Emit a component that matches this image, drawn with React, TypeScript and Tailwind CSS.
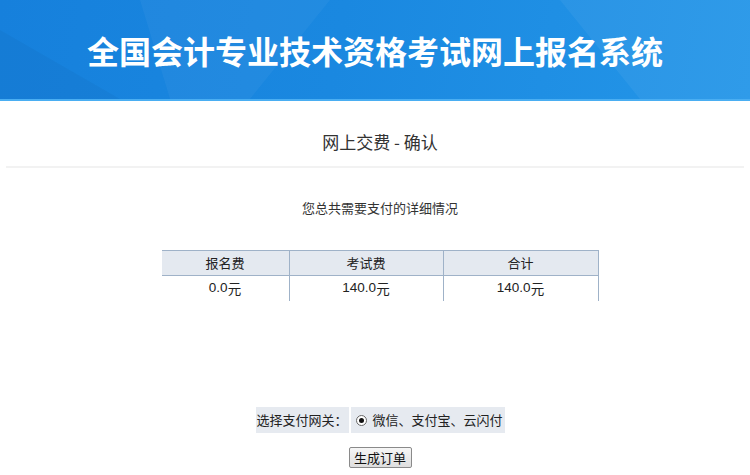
import React from "react";

const font = { fontFamily: '"Noto Sans CJK SC", "Liberation Sans", sans-serif' };
const numFont = { fontFamily: '"Liberation Sans", "Noto Sans CJK SC", sans-serif' };

export default function App() {
  return (
    <div className="w-[750px] h-[475px] bg-white overflow-hidden text-[#333]" style={font}>
      <header className="relative h-[101px] bg-[linear-gradient(100deg,#1680dc_0%,#1a88e0_45%,#2496e8_100%)] border-b-[2px] border-[#4aaef2] flex items-center justify-center">
        <svg className="absolute inset-0 w-full h-full" viewBox="0 0 750 99" preserveAspectRatio="none">
          <polygon points="140,0 330,0 250,99 170,99" fill="#ffffff" opacity="0.04" />
          <polygon points="560,0 750,0 750,99 640,99" fill="#ffffff" opacity="0.05" />
          <polygon points="0,30 120,99 0,99" fill="#000000" opacity="0.03" />
        </svg>
        <h1 className="relative text-white font-bold text-[32px] leading-[40px] tracking-[0px]">
          全国会计专业技术资格考试网上报名系统
        </h1>
      </header>

      <main className="pl-[10px]">
        <div className="pt-[29px] pb-[12px] text-center text-[17px] leading-[24px] text-[#333]">
          网上交费 - 确认
        </div>
      </main>
      <div className="mx-[6px] h-[2px] bg-[#f2f2f2]" />

      <main className="pl-[10px] flex flex-col items-center">
        <div className="mt-[30px] text-[13px] leading-[20px] text-[#333]">您总共需要支付的详细情况</div>

        <div className="mt-[32px] w-[437px] text-[13px] text-[#222]">
          <div className="flex h-[26px] bg-[#e4e9f0] border-t border-b border-r border-[#9fb2c8]">
            <div className="w-[128px] flex items-center justify-center border-r border-[#9fb2c8]">报名费</div>
            <div className="w-[154px] flex items-center justify-center border-r border-[#9fb2c8]">考试费</div>
            <div className="flex-1 flex items-center justify-center">合计</div>
          </div>
          <div className="flex h-[25px] border-r border-[#9fb2c8] text-[13.5px]" style={numFont}>
            <div className="w-[128px] flex items-center justify-center border-r border-[#9fb2c8]">0.0<span style={font}>元</span></div>
            <div className="w-[154px] flex items-center justify-center border-r border-[#9fb2c8]">140.0<span style={font}>元</span></div>
            <div className="flex-1 flex items-center justify-center">140.0<span style={font}>元</span></div>
          </div>
        </div>

        <div className="mt-[106px] flex gap-[2px] h-[26px] text-[13px] text-[#222]">
          <div className="w-[93px] bg-[#e6eaf0] flex items-center justify-center">选择支付网关：</div>
          <div className="w-[154px] bg-[#e6eaf0] flex items-center pl-[5px]">
            <span className="w-[11px] h-[11px] rounded-full border border-[#666] bg-white flex items-center justify-center mr-[6px]">
              <span className="w-[5px] h-[5px] rounded-full bg-[#111]" />
            </span>
            微信、支付宝、云闪付
          </div>
        </div>

        <button className="mt-[14px] w-[63px] h-[21px] border border-[#8a8a8a] bg-[linear-gradient(#f6f6f6,#dedede)] text-[13px] leading-[19px] text-[#111] rounded-[2px]">
          生成订单
        </button>
      </main>
    </div>
  );
}
